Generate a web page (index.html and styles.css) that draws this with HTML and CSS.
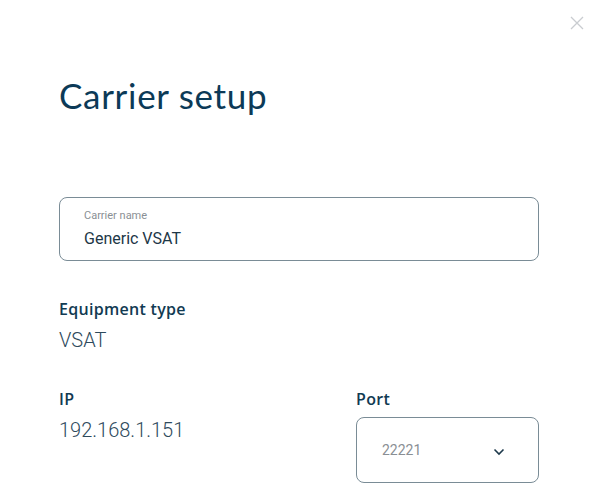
FILE: index.html
```html
<!DOCTYPE html>
<html>
<head>
<meta charset="utf-8">
<link rel="stylesheet" href="styles.css">
</head>
<body>
<div class="dialog">
  <button class="close" aria-label="Close">
    <svg width="14" height="14" viewBox="0 0 14 14"><path d="M1 1L13 13M13 1L1 13" stroke="#c9ccd0" stroke-width="1.3" fill="none"/></svg>
  </button>
  <h1 class="title">Carrier setup</h1>
  <div class="field">
    <div class="field-label">Carrier name</div>
    <div class="field-value">Generic VSAT</div>
  </div>
  <div class="info">
    <div class="label">Equipment type</div>
    <div class="value">VSAT</div>
  </div>
  <div class="row">
    <div class="col-ip">
      <div class="label">IP</div>
      <div class="value">192.168.1.151</div>
    </div>
    <div class="col-port">
      <div class="label">Port</div>
      <div class="select">
        <span class="select-value">22221</span>
        <svg width="12" height="8" viewBox="0 0 12 8"><path d="M1.5 1.5L6 6L10.5 1.5" stroke="#1e3a4c" stroke-width="1.6" fill="none"/></svg>
      </div>
    </div>
  </div>
</div>
</body>
</html>
```
FILE: styles.css
```css
html, body { margin: 0; padding: 0; background: #fff; }
body { width: 598px; height: 504px; overflow: hidden; }
.dialog { position: relative; padding: 0 59px; }
.close { position: absolute; top: 16px; left: 570px; background: none; border: 0; padding: 0; width: 14px; height: 14px; cursor: pointer; }
.close svg { display: block; }
.title {
  margin: 0; padding-top: 73px;
  font-family: "Lato", "Open Sans", sans-serif; font-weight: 400;
  font-size: 35px; line-height: 44px; color: #0c3a57; letter-spacing: 0.7px;
}
.field {
  margin-top: 80px; box-sizing: border-box; height: 64px;
  border: 1px solid #7a8c96; border-radius: 8px;
  padding: 11px 24px 0;
}
.field-label { font-family: "Roboto", sans-serif; font-size: 11px; line-height: 14px; color: #8a8f94; }
.field-value { font-family: "Roboto", sans-serif; font-size: 16px; line-height: 20px; color: #1d3747; margin-top: 6px; }
.label { font-family: "Open Sans", sans-serif; font-weight: 600; font-size: 16px; line-height: 20px; color: #113a52; letter-spacing: 0.3px; }
.value { font-family: "Roboto", sans-serif; font-weight: 300; font-size: 20px; line-height: 24px; color: #2e4a5c; margin-top: 9px; }
.info { margin-top: 38px; }
.row { display: flex; margin-top: 37px; }
.col-ip { width: 297px; }
.col-port { flex: 1; }
.select {
  margin-top: 8px; height: 66px; box-sizing: border-box;
  border: 1px solid #7a8c96; border-radius: 8px;
  display: flex; align-items: center; padding: 0 33px 0 25px; justify-content: space-between;
}
.select-value { font-family: "Roboto", sans-serif; font-size: 14px; color: #8a8f94; }
.select svg { display: block; margin-top: 3px; }
```
